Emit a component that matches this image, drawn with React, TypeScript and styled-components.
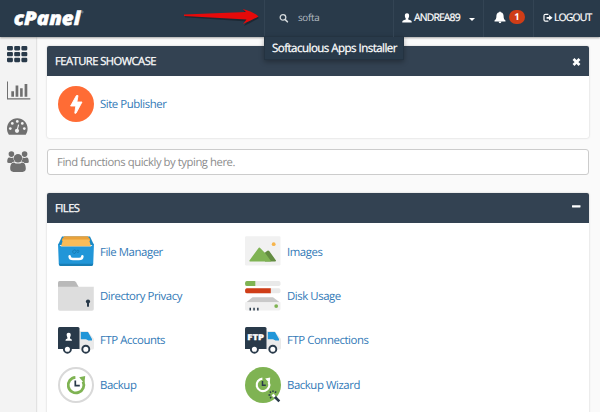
import React from "react";
import styled, { createGlobalStyle } from "styled-components";

const GlobalStyle = createGlobalStyle`
  * { box-sizing: border-box; }
  html, body { margin: 0; padding: 0; }
  body {
    width: 600px;
    height: 412px;
    overflow: hidden;
    background: #fafafa;
    font-family: "Open Sans", sans-serif;
    font-size: 12px;
    color: #333;
    text-rendering: geometricPrecision;
  }
`;

const Page = styled.div`
  width: 600px;
  height: 412px;
  overflow: hidden;
  display: flex;
  flex-direction: column;
`;

const TopBar = styled.header`
  flex: none;
  height: 37px;
  display: flex;
  background: #293a4a;
  color: #fff;
  box-shadow: 0 1px 2px rgba(0, 0, 0, 0.35);
  position: relative;
  z-index: 2;
`;

const Brand = styled.div`
  width: 264px;
  padding: 3px 0 0 13px;
`;

const NavCell = styled.div<{ $width: number; $pad: number; $gap: number }>`
  width: ${(p) => p.$width}px;
  padding-left: ${(p) => p.$pad}px;
  padding-bottom: 2px;
  gap: ${(p) => p.$gap}px;
  display: flex;
  align-items: center;
  border-left: 1px solid #334454;
  position: relative;
  white-space: nowrap;
`;

const NavText = styled.span<{ $width: number }>`
  width: ${(p) => p.$width}px;
  font-size: 10.4px;
  letter-spacing: -0.85px;
  -webkit-text-stroke: 0.2px #fff;
`;

const Query = styled.span`
  font-size: 9.8px;
  letter-spacing: -0.3px;
  color: #b4bcc3;
`;

const Caret = styled.i`
  border: 3px solid transparent;
  border-top-color: #fff;
  border-bottom: 0;
  margin-top: 3px;
`;

const Badge = styled.span`
  width: 16px;
  height: 14px;
  border-radius: 7px;
  background: #cf3d17;
  font-size: 9.5px;
  line-height: 14px;
  font-weight: 700;
  text-align: center;
  margin-top: -1px;
`;

const Suggestion = styled.div`
  position: absolute;
  top: 36px;
  left: -1px;
  width: 140px;
  height: 24px;
  padding-left: 7px;
  background: #293a4a;
  border: 1px solid #243341;
  line-height: 23px;
  font-size: 11.5px;
  letter-spacing: -0.52px;
  -webkit-text-stroke: 0.25px #fff;
  box-shadow: 0 2px 5px rgba(0, 0, 0, 0.3);
`;

const Main = styled.div`
  flex: 1;
  display: flex;
`;

const Sidebar = styled.nav`
  flex: none;
  width: 36px;
  padding: 9px 0 0 7px;
  background: #f3f3f3;
  box-shadow: 0 0 2px rgba(0, 0, 0, 0.3);
  display: flex;
  flex-direction: column;
`;

const Content = styled.main`
  width: 553px;
  margin-left: 11px;
  padding: 9px 0 0;
`;

const Panel = styled.section<{ $height: number }>`
  width: 542px;
  height: ${(p) => p.$height}px;
  background: #fff;
  border-radius: 2px;
  box-shadow: 0 0 2px rgba(0, 0, 0, 0.22);
`;

const PanelHeader = styled.h2`
  margin: 0;
  height: 29.5px;
  padding: 1px 8px 0 8px;
  display: flex;
  align-items: center;
  justify-content: space-between;
  background: #334252;
  border-radius: 2px 2px 0 0;
  color: #fff;
  font-weight: 400;
  font-size: 11.2px;
  letter-spacing: -0.52px;
  -webkit-text-stroke: 0.25px #fff;
`;

const ItemGrid = styled.div<{ $top: number }>`
  display: grid;
  grid-template-columns: 187px 187px;
  grid-auto-rows: 44.4px;
  padding: ${(p) => p.$top}px 0 0 10.5px;
`;

const Item = styled.a`
  display: flex;
  align-items: center;
  gap: 6.5px;
  color: #337ab7;
  font-size: 11.4px;
  letter-spacing: -0.44px;
  white-space: nowrap;
  svg { flex: none; }
`;

const ItemLabel = styled.span`
  padding-top: 1.2px;
`;

const Finder = styled.div`
  width: 542px;
  height: 26px;
  margin: 11px 0 18px;
  padding-left: 9px;
  border: 1px solid #ccc;
  border-radius: 3px;
  background: #fff;
  line-height: 26px;
  font-size: 11.3px;
  letter-spacing: -0.45px;
  color: #8d8d8d;
`;

const Logo = () => (
  <svg width="90" height="30" viewBox="0 0 90 30" overflow="visible">
    <g fill="#fff" stroke="#fff" strokeWidth="0.5" strokeLinejoin="round" fontFamily="Open Sans, sans-serif" fontWeight="800" fontStyle="italic">
      <text x="0.8" y="21.6" fontSize="19" textLength="66.5" lengthAdjust="spacingAndGlyphs">cPanel</text>
    </g>
    <circle cx="69.3" cy="9" r="0.9" fill="none" stroke="#9ba5ae" strokeWidth="0.6" />
  </svg>
);

const Arrow = styled.svg`
  position: absolute;
  left: 181px;
  top: 6px;
`;

const PointerArrow = () => (
  <Arrow width="82" height="22" viewBox="0 0 82 22">
    <path d="M3.5 9.2 L65 7 L62 3.5 Q73 7 77.5 11 Q71 15 62.5 19 L65.5 14.5 L3.5 10.2Z" transform="translate(0.4 1)" fill="#17212b" opacity="0.7" />
    <path d="M3 8.4 L65 6 L61.8 3 Q73 6.2 77.5 10.4 Q71 14 62 18 L65.5 13.4 L3 9.9Z" fill="#e60a0a" />
  </Arrow>
);

const SearchIcon = () => (
  <svg width="10" height="10" viewBox="0 0 10 10" fill="none" stroke="#d5dadd">
    <circle cx="4" cy="4.4" r="2.8" strokeWidth="1.3" />
    <path d="M6.2 6.6 L8.4 8.8" strokeWidth="1.6" strokeLinecap="round" />
  </svg>
);

const UserIcon = () => (
  <svg width="10" height="10" viewBox="0 0 10 10" fill="#fff">
    <path d="M5 .3C6.7.3 7.3 1.6 7.1 3.2 7 4.5 6.4 5 6.2 5.5V6.4L9 7.6Q9.8 8 9.8 9.6H.2Q.2 8 1 7.6L3.8 6.4V5.5C3.6 5 3 4.5 2.9 3.2 2.7 1.6 3.3.3 5 .3Z" />
  </svg>
);

const BellIcon = () => (
  <svg width="12" height="13" viewBox="0 0 12 13" fill="#fff">
    <path d="M5.2 1.3a.8.8 0 0 1 1.6 0C9 1.8 9.6 3.5 9.6 5.3 9.6 7.6 10.3 8.7 11.5 9.6V10.4H.5V9.6C1.7 8.7 2.4 7.6 2.4 5.3 2.4 3.5 3 1.8 5.2 1.3ZM4.6 10.8H7.4Q7.2 12.2 6 12.2 4.8 12.2 4.6 10.8Z" />
  </svg>
);

const LogoutIcon = () => (
  <svg width="10" height="10" viewBox="0 0 10 10">
    <path d="M5.4 1.3H2.5Q1 1.3 1 2.8V6.7Q1 8.2 2.5 8.2H5.4" fill="none" stroke="#fff" strokeWidth="1.2" />
    <path d="M3.6 3.9H6.1V2L9.6 4.8 6.1 7.5V5.7H3.6Z" fill="#fff" />
  </svg>
);

const CloseIcon = () => (
  <svg width="9" height="9" viewBox="0 0 9 9" overflow="visible">
    <path d="M1.5 2 7.5 8M7.5 2 1.5 8" stroke="#fff" strokeWidth="2.7" />
  </svg>
);

const MinusIcon = () => (
  <svg width="9" height="6" viewBox="0 0 9 6">
    <rect x="0" y="0.2" width="8.5" height="2.2" rx="0.4" fill="#fff" />
  </svg>
);

const SideGlyph = styled.svg<{ $gap: number }>`
  display: block;
  flex: none;
  margin-bottom: ${(p) => p.$gap}px;
`;

const AppsIcon = () => (
  <SideGlyph $gap={18} width="24" height="17" viewBox="0 0 24 17" fill="#293a4a">
    {[0, 5.9, 11.8].map((y) =>
      [0, 7.2, 14.4].map((x) => <rect key={`${x}-${y}`} x={x} y={y} width="5.9" height="4.4" rx="1.1" />)
    )}
  </SideGlyph>
);

const StatsIcon = () => (
  <SideGlyph $gap={18} width="24" height="19" viewBox="0 0 24 19" fill="#707070">
    <path d="M0 0.5H1V17.2H23.3V18.4H0Z" />
    <path d="M4.3 10.2H7V15.8H4.3ZM8.6 4.4H11.3V15.8H8.6ZM13.1 7.3H15.7V15.8H13.1ZM17.6 3H20.3V15.8H17.6Z" />
  </SideGlyph>
);

const GaugeIcon = () => (
  <SideGlyph $gap={15} width="24" height="18" viewBox="0 0 24 18">
    <path d="M10.3.2C16 .2 20.6 4.8 20.6 10.5 20.6 12.8 20 14.7 18.9 16.4Q18.7 16.8 18 16.8H2.6Q1.9 16.8 1.7 16.4C.6 14.7 0 12.8 0 10.5 0 4.8 4.6.2 10.3.2Z" fill="#707070" />
    <g fill="#f3f3f3">
      <circle cx="3.3" cy="10.6" r="1.35" />
      <circle cx="5.3" cy="5.4" r="1.35" />
      <circle cx="10.3" cy="3.4" r="1.35" />
      <circle cx="15.3" cy="5.4" r="1.35" />
      <circle cx="17.3" cy="10.6" r="1.35" />
      <circle cx="10" cy="12.8" r="2.1" />
    </g>
    <path d="M10 12.8 11.5 7" stroke="#f3f3f3" strokeWidth="1.1" strokeLinecap="round" />
  </SideGlyph>
);

const UsersIcon = () => (
  <SideGlyph $gap={0} width="24" height="22" viewBox="0 0 24 22" fill="#707070">
    <circle cx="4.4" cy="3.1" r="2.8" />
    <circle cx="17.6" cy="3.1" r="2.8" />
    <path d="M.2 10.8C.2 8 .8 6.4 2.2 6.4 3.4 6.8 5 7.2 6.4 6.6 6.3 8.3 6.9 9.4 7.7 10.6 6.4 10.7 5.4 11.1 4.6 12H1.8Q.2 12 .2 10.8ZM21.8 10.8C21.8 8 21.2 6.4 19.8 6.4 18.6 6.8 17 7.2 15.6 6.6 15.7 8.3 15.1 9.4 14.3 10.6 15.6 10.7 16.6 11.1 17.4 12H20.2Q21.8 12 21.8 10.8Z" />
    <circle cx="11" cy="7.2" r="4.2" />
    <path d="M3.2 17.6C3.2 14.2 4.2 11.4 7 11.4 9 13 13 13 15 11.4 17.8 11.4 18.8 14.2 18.8 17.6 18.8 19.8 17.6 20.9 15.6 20.9H6.4C4.4 20.9 3.2 19.8 3.2 17.6Z" />
  </SideGlyph>
);

const ItemSvg = ({ children }: { children: React.ReactNode }) => (
  <svg width="36" height="36" viewBox="0 0 36 36">{children}</svg>
);

const PublisherArt = () => (
  <ItemSvg>
    <circle cx="18" cy="18" r="18" fill="#ff6c35" />
    <path d="M18.4 9.6H20L18.9 16H24L18 27.2H16.8L17.8 20H12.6Z" fill="#fff" stroke="#fff" strokeWidth="0.9" strokeLinejoin="round" />
  </ItemSvg>
);

const FileManagerArt = () => (
  <ItemSvg>
    <path d="M4 3.6H32L36 12H0Z" fill="#1c88c3" />
    <path d="M6.4 3.3H29.6L32 6V8H4V6Z" fill="#e9a23b" />
    <path d="M5 6.5H31L33 13.4H3Z" fill="#f9bc59" />
    <path d="M0 10.5 3.2 13.4H32.8L36 10.5 35.2 31Q35.1 32.8 33.5 32.8H2.5Q.9 32.8.8 31Z" fill="#2196d8" />
    <path d="M.8 30.8H35.2Q35 33 33.5 33H2.5Q1 33 .8 30.8Z" fill="#187eb5" />
    <path d="M11.6 23.3Q11.8 26 15 26H21Q24.2 26 24.4 23.3" fill="none" stroke="#fff" strokeWidth="2.5" strokeLinecap="round" />
    <path d="M18 17.7A1.8 1.8 0 1 0 17 20.4L19 17.3Q21.5 16.6 21 18.7 20.4 19.8 19 19.3" fill="none" stroke="#177db5" strokeWidth="1" />
  </ItemSvg>
);

const DirectoryArt = () => (
  <ItemSvg>
    <path d="M0 4.5Q0 3 1.5 3H16Q17.2 3 18 4.2L21 9.5H0Z" fill="#b9b9b9" />
    <path d="M0 8.8H35.8V31Q35.8 32.7 34 32.7H1.8Q0 32.7 0 31Z" fill="#ddd" />
    <circle cx="30" cy="23.5" r="2.1" fill="#293a4a" />
    <rect x="29" y="23.5" width="2" height="5.2" fill="#293a4a" />
  </ItemSvg>
);

const TruckArt = ({ label }: { label?: string }) => (
  <ItemSvg>
    <path d="M21 9H29.5L36 17V26Q36 27.5 34.5 27.5H21Z" fill="#eaeaea" />
    <path d="M22.8 10H30L34 17V18.5H30.5L28 17.3H22.8Z" fill="#2196d8" />
    <path d="M0 6.5Q0 5 1.5 5H20Q21.5 5 21.5 6.5V27H0Z" fill="#293a4a" />
    <circle cx="9.4" cy="27.2" r="3.5" fill="#fff" stroke="#293a4a" strokeWidth="1.9" />
    <circle cx="27.8" cy="27.2" r="3.5" fill="#fff" stroke="#293a4a" strokeWidth="1.9" />
    {label ? (
      <text x="2.3" y="18.4" fill="#fff" stroke="#fff" strokeWidth="0.3" fontFamily="Open Sans, sans-serif" fontSize="8" fontWeight="800" textLength="16.6" lengthAdjust="spacingAndGlyphs" letterSpacing="0">{label}</text>
    ) : (
      <path d="M10.7 10.8C12.5 10.8 12.9 12 12.7 13.4L12 15.4V16.4Q14 16.9 14 18.8H7.4Q7.4 16.9 9.4 16.4V15.4L8.7 13.4C8.5 12 8.9 10.8 10.7 10.8Z" fill="#fff" />
    )}
  </ItemSvg>
);

const BackupArt = () => (
  <ItemSvg>
    <circle cx="18" cy="18" r="17" fill="#fff" stroke="#d9d9d9" strokeWidth="2" />
    <path d="M17.4 10.3A7.8 7.8 0 1 0 25 14.6" fill="none" stroke="#7fb353" strokeWidth="2.8" />
    <path d="M21.2 10.2 27.2 9 26.4 16.4Z" fill="#7fb353" />
    <path d="M17.3 13.5V18.7H21.8" fill="none" stroke="#293a4a" strokeWidth="1.7" />
  </ItemSvg>
);

const ImagesArt = () => (
  <ItemSvg>
    <rect x="0" y="3.3" width="35.5" height="29.2" rx="1.2" fill="#f1f1f1" />
    <circle cx="28.7" cy="11.2" r="1.9" fill="#f7b54b" />
    <path d="M18.5 20.7 22 18Q23 17.2 24.2 18L31 27.4Q31.2 28.5 30 28.5H20Z" fill="#638c41" />
    <path d="M4.6 27.2 13.2 15.5Q14.3 13.8 15.4 15.3L20.3 20.3 26.3 28.5H5Q3.8 28.5 4.6 27.2Z" fill="#7fb353" />
  </ItemSvg>
);

const DiskArt = () => (
  <ItemSvg>
    <rect x="0" y="3" width="35.5" height="5" rx="1.7" fill="#e9e9e9" />
    <path d="M1.7 3H10.3V8H1.7Q0 8 0 5.5 0 3 1.7 3Z" fill="#7fb353" />
    <rect x="0" y="10.3" width="35.5" height="5" rx="1.7" fill="#e9e9e9" />
    <path d="M1.7 10.3H25.8V15.3H1.7Q0 15.3 0 12.8 0 10.3 1.7 10.3Z" fill="#cf3d17" />
    <path d="M7.5 19.2H28L35 24.5H1Z" fill="#c9c9c9" />
    <path d="M0 24.2H35.5V31Q35.5 32.4 34 32.4H1.5Q0 32.4 0 31Z" fill="#f0f0f0" />
    <circle cx="31.2" cy="28.1" r="1.9" fill="#7fb353" />
    <path d="M4.5 29.7H6V32.4H4.5ZM8.3 29.7H9.8V32.4H8.3ZM12.1 29.7H13.6V32.4H12.1Z" fill="#293a4a" />
  </ItemSvg>
);

const WizardArt = () => (
  <ItemSvg>
    <circle cx="18" cy="18" r="18" fill="#7fb353" />
    <path d="M17.4 11.6A6.3 6.3 0 1 0 23.6 15" fill="none" stroke="#fff" strokeWidth="2.2" />
    <path d="M20.2 11.4 25.2 10.6 24.8 16.6Z" fill="#fff" />
    <path d="M17.5 14V18.3H20.8" fill="none" stroke="#293a4a" strokeWidth="1.5" />
    <path d="M29.5 29.5 34.3 34.3" stroke="#293a4a" strokeWidth="2.6" />
    <path d="M27.5 27.5 29.8 29.8" stroke="#fff" strokeWidth="2.6" />
    <path d="M28 23.4V25M23.5 28H25.3M24.8 24.6 26 25.8M31.2 24.5 30 25.7M25 31.2 26.2 30" stroke="#293a4a" strokeWidth="1.4" />
  </ItemSvg>
);

const FILES = [
  { name: "File Manager", art: <FileManagerArt /> },
  { name: "Images", art: <ImagesArt /> },
  { name: "Directory Privacy", art: <DirectoryArt /> },
  { name: "Disk Usage", art: <DiskArt /> },
  { name: "FTP Accounts", art: <TruckArt /> },
  { name: "FTP Connections", art: <TruckArt label="FTP" /> },
  { name: "Backup", art: <BackupArt /> },
  { name: "Backup Wizard", art: <WizardArt /> },
];

export default function App() {
  return (
    <Page>
      <GlobalStyle />
      <TopBar>
        <Brand><Logo /></Brand>
        <PointerArrow />
        <NavCell $width={129} $pad={14} $gap={9}>
          <SearchIcon />
          <Query>softa</Query>
          <Suggestion>Softaculous Apps Installer</Suggestion>
        </NavCell>
        <NavCell $width={90} $pad={8} $gap={2}>
          <UserIcon />
          <NavText $width={53}>ANDREA89</NavText>
          <Caret />
        </NavCell>
        <NavCell $width={50} $pad={10} $gap={3}>
          <BellIcon />
          <Badge>1</Badge>
        </NavCell>
        <NavCell $width={67} $pad={9} $gap={1}>
          <LogoutIcon />
          <NavText $width={40}>LOGOUT</NavText>
        </NavCell>
      </TopBar>
      <Main>
        <Sidebar>
          <AppsIcon />
          <StatsIcon />
          <GaugeIcon />
          <UsersIcon />
        </Sidebar>
        <Content>
          <Panel $height={92}>
            <PanelHeader>FEATURE SHOWCASE<CloseIcon /></PanelHeader>
            <ItemGrid $top={6.5}>
              <Item><PublisherArt /><ItemLabel>Site Publisher</ItemLabel></Item>
            </ItemGrid>
          </Panel>
          <Finder>Find functions quickly by typing here.</Finder>
          <Panel $height={230}>
            <PanelHeader>FILES<MinusIcon /></PanelHeader>
            <ItemGrid $top={6.8}>
              {FILES.map((f) => (
                <Item key={f.name}>{f.art}<ItemLabel>{f.name}</ItemLabel></Item>
              ))}
            </ItemGrid>
          </Panel>
        </Content>
      </Main>
    </Page>
  );
}
